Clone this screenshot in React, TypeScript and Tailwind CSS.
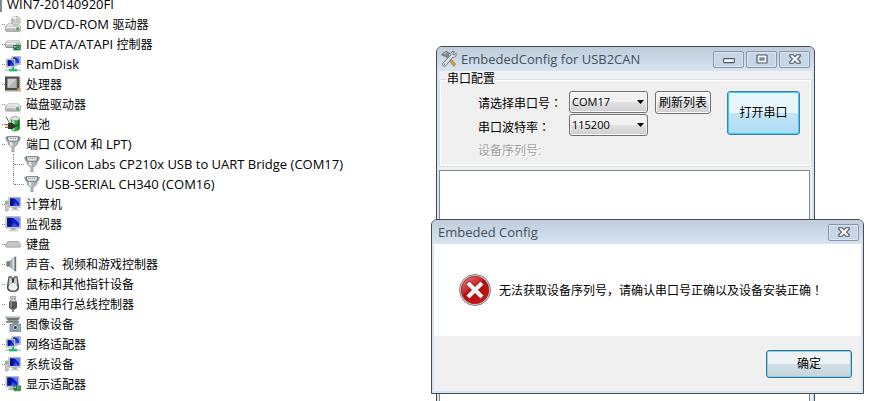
import React, { useState } from "react";

const UI_FONT = "font-['Open_Sans','Noto_Sans_CJK_SC',sans-serif]";
const DIALOG_FONT = "font-['Liberation_Sans','Noto_Sans_CJK_SC',sans-serif]";
const CENTERED_MARK = "font-['Noto_Sans_CJK_JP',sans-serif]";

function Svg({ children }: { children: React.ReactNode }) {
  return (
    <svg viewBox="0 0 16 16" className="size-4 shrink-0" aria-hidden="true">
      {children}
    </svg>
  );
}

function DriveBody({ y }: { y: number }) {
  return (
    <g transform={`translate(0 ${y})`}>
      <path d="M3 .4h10.5L15.7 3.2v4.4l-1.2.9H1.5L.3 7.6V3.2z" fill="#8d8d8d" />
      <path d="M3.2 .7h10L15.2 3.2H.8z" fill="#e4e4e4" />
      <path d="M1 3.2h14.2V7l-.8.6H1.8L1 7z" fill="#c9c9c9" />
      <path d="M1.4 3.6h13.4v1.1H1.4z" fill="#f4f4f4" />
      <path d="M1.6 5.6h8.6v1.2H1.6z" fill="#b2b2b2" />
      <path d="M11.5 4h2.2v3h-2.2z" fill="#1d9b2a" />
      <path d="M12 4.4h1v1h-1z" fill="#7cf081" />
    </g>
  );
}

function Card({ x, y }: { x: number; y: number }) {
  return (
    <g transform={`translate(${x} ${y})`}>
      <path d="M0 0h7.4v5.2H0z" fill="#1d7a48" />
      <path d="M1 1h1.5v1.5H1zM3.5 1H6v2.6H3.5z" fill="#a5d8b4" />
      <path d="M4 1.6h1.5v1.4H4z" fill="#143d2a" />
      <path d="M1 5.2h1v1H1zM3 5.2h1v1H3zM5 5.2h1v1H5z" fill="#c29a3d" />
    </g>
  );
}

function Screen({ x, y, w, h }: { x: number; y: number; w: number; h: number }) {
  return (
    <g>
      <rect x={x} y={y} width={w} height={h} rx=".5" fill="#d3d6da" stroke="#8f959c" strokeWidth=".6" />
      <rect x={x + 1.3} y={y + 1.2} width={w - 2.6} height={h - 2.6} fill="#0c1ec4" />
      <path d={`M${x + 1.3} ${y + 1.2}h${w * 0.3}v${h - 2.6}h${-w * 0.3}z`} fill="#0a1180" />
      <path d={`M${x + w * 0.5} ${y + 1.2}h${w * 0.5 - 1.3}v${h * 0.5}z`} fill="#5c83ff" />
      <path d={`M${x + w * 0.35} ${y + h - 1.4}l${w * 0.2} ${-h * 0.35}l${w * 0.3} ${h * 0.35}z`} fill="#3450ee" />
    </g>
  );
}

const DvdIcon = () => (
  <Svg>
    <DriveBody y={7.2} />
    <circle cx="10.8" cy="4.8" r="4.5" fill="#d4d4d8" stroke="#969696" strokeWidth=".7" />
    <path d="M10.8 4.8 8 1.4A4.3 4.3 0 0 1 11 .5z" fill="#fff" />
    <path d="M10.8 4.8 13.8 8a4.3 4.3 0 0 0 1.2-2.5z" fill="#a9dca9" />
    <path d="M10.8 4.8 6.6 6.2 6.5 4z" fill="#b5b5c9" />
    <circle cx="10.8" cy="4.8" r="1.4" fill="#fff" stroke="#888" strokeWidth=".6" />
  </Svg>
);
const IdeIcon = () => (
  <Svg>
    <DriveBody y={3.5} />
    <Card x={8.3} y={9} />
  </Svg>
);
const DiskIcon = () => (
  <Svg>
    <DriveBody y={7} />
  </Svg>
);
const NetworkIcon = () => (
  <Svg>
    <Screen x={6.8} y={0.4} w={8.8} h={8.2} />
    <Screen x={1.4} y={3} w={8.8} h={8.2} />
    <path d="M11 8.6h2v1.2h-2z" fill="#aaa" />
    <path d="M7 11.4h2v2H7z" fill="#13a262" />
    <path d="M0 13.4h16v1.6H0z" fill="#c2c8c4" />
    <path d="M4 13h8v2.4H4z" fill="#1cc079" />
  </Svg>
);
const CpuIcon = () => (
  <Svg>
    <path d="M.5 15.4h15M15.3 2v13" stroke="#c7a254" strokeWidth="1.2" strokeDasharray="1 1" />
    <path d="M0 .5h14.5v14H0z" fill="#4c4c4c" />
    <path d="M2.6 2.8h9.2v9.2H2.6z" fill="#b4b4b4" />
    <path d="M2.6 2.8h9.2l-9.2 9.2z" fill="#d0d0d0" />
    <path d="M12 12h2v2h-2z" fill="#c58b22" />
  </Svg>
);
const BatteryIcon = () => (
  <Svg>
    <path d="M5.6 2.8h9v9.8q-.6 2.6-4.5 2.8t-4.5-2.8z" fill="#2aa83a" />
    <path d="M7 3.6h2.4v11H7.8L7 13.6z" fill="#a8f0a8" />
    <path d="M12.8 3.6h1.8v9.2l-1.8 1.6z" fill="#12702a" />
    <ellipse cx="10.1" cy="2.6" rx="4.5" ry="2" fill="#e4e8e4" stroke="#777" strokeWidth=".6" />
    <path d="M1 .8 3.4 5q.6 2 2 2.4" stroke="#5b5b5b" fill="none" />
    <path d="M3 7h4.4l3.2 2.2v1.6L7.4 13H3z" fill="#33322f" />
    <path d="M10 10q2.4.2 3-2.2" stroke="#2e3a2e" strokeWidth="1.2" fill="none" />
    <path d="M0 8.6h3.4M0 11.4h3.4" stroke="#8e7440" strokeWidth="1.3" />
  </Svg>
);
const PortIcon = () => (
  <Svg>
    <path d="M.5 1.2h2.3v3.4H1.5zM13.2 1.2h2.3l-1 3.4h-1.3z" fill="#a4a9ac" stroke="#6f7477" strokeWidth=".5" />
    <path d="M2.3 .7h11.4l-1 4.6H3.3z" fill="#eceeef" stroke="#5f6467" strokeWidth=".9" />
    <path d="M4.6 2.6h6.8" stroke="#85898c" strokeWidth="1" strokeDasharray="1 .8" />
    <path d="M2.6 5.4h10.8l-1 3-2.4 2.4H6L3.6 8.4z" fill="#aeb3b6" stroke="#7b8184" strokeWidth=".6" />
    <path d="M5 6h2l.6 4.2H6.4L5 8.6z" fill="#e6e9ea" />
    <path d="M6.6 10.8h2.8V16H6.6z" fill="#c4c8ca" />
    <path d="M6.4 12h3.2M6.4 13.8h3.2M6.4 15.6h3.2" stroke="#84898c" strokeWidth=".7" />
  </Svg>
);
const ComputerIcon = () => (
  <Svg>
    <path d="M.4 5h2.8v9.8H.4z" fill="#d1d1cb" stroke="#858585" strokeWidth=".6" />
    <path d="M1 6h1.4v1.8H1z" fill="#3abf46" />
    <Screen x={3.8} y={1.2} w={12} h={10} />
    <path d="M8 11.3h4v2H8z" fill="#a5a5a0" />
    <path d="M6 13.2h8v1.2H6z" fill="#c3c3bf" />
  </Svg>
);
const MonitorIcon = () => (
  <Svg>
    <Screen x={0.8} y={0.6} w={14.8} h={11.6} />
    <path d="M6 12.2h4.5v2H6z" fill="#aaa9a2" />
    <path d="M3.5 13.8h9.5v1.6H3.5z" fill="#c9c9c4" />
  </Svg>
);
const KeyboardIcon = () => (
  <Svg>
    <path d="M3 5h10.2l2.5 3.8v1.8l-1.2 1h-13l-1.2-1V8.8z" fill="#8d8d8d" />
    <path d="M3.4 5.6h9.4l2.2 3.4H1.2z" fill="#dedede" />
    <path d="M3.4 6.6h9.6M2.4 8.2h11.6" stroke="#8b8b8b" strokeWidth=".9" strokeDasharray="1 1" />
    <path d="M1 9.4h14v1H1z" fill="#f4f4f4" />
  </Svg>
);
const SpeakerIcon = () => (
  <Svg>
    <path d="M1.5 5.2h3.2v5.4H1.5z" fill="#6f7478" />
    <path d="M4.7 5.2 10 .8v14.4l-5.3-4.6z" fill="#a8adb0" stroke="#777" strokeWidth=".5" />
    <path d="M7.5 3.5 9 2v12l-1.5-1.5z" fill="#dfe3e5" />
    <path d="M10 .8h1.2v14.4H10z" fill="#6c7174" />
  </Svg>
);
const MouseIcon = () => (
  <Svg>
    <path d="M3.6.3h3L8 2.2 9.4.3h3L13.6 7l.6 4.4Q13.6 16 8 16t-6.2-4.6L2.4 7z" fill="#4c5056" />
    <path d="M4.4 1.4h1.8L7.2 5v2L3.6 9zM11.6 1.4H9.8L8.8 5v2l3.6 2z" fill="#c9ccd0" />
    <path d="M8 6.8q3.6.4 4.6 4.6-.6 3-4.6 3.2-4-.2-4.6-3.2Q4.400 7.200 8 6.800z" fill="#f1f1f1" />
    <path d="M8 3.200v3" stroke="#2c2f33" strokeWidth="1.400" />
  </Svg>
);
const UsbIcon = () => (
  <Svg>
    <path d="M5.3.5h5.4V6H5.3z" fill="#d5d5d5" stroke="#8a8a8a" strokeWidth=".7" />
    <path d="M6.5 2h1v1.500h-1zM8.800 2h1v1.500h-1z" fill="#777" />
    <path d="M4 5.500h8v5.700l-2 2.300H6l-2-2.300z" fill="#565656" />
    <path d="M5 6h2v5.500H5z" fill="#878787" />
    <path d="M7.200 13.500h1.600V16H7.200z" fill="#666" />
  </Svg>
);
const CameraIcon = () => (
  <Svg>
    <path d="M0 .8h15.500l-2.500 4H3z" fill="#6d7778" />
    <path d="M.5 .8h14.500v1.200H.5z" fill="#b0b9b9" />
    <path d="M1 5.200h13v1.400H1z" fill="#566061" />
    <path d="M5 8.300h2.500l1-1.300h4l1 1.300H16v7H5z" fill="#a2b3ba" stroke="#4d5c62" strokeWidth=".7" />
    <circle cx="10.400" cy="11.600" r="2.900" fill="#e9f1f4" stroke="#3f4e55" strokeWidth=".7" />
    <circle cx="10.400" cy="11.600" r="1.600" fill="#26435a" />
  </Svg>
);
const DisplayIcon = () => (
  <Svg>
    <Screen x={1} y={0.4} w={13} h={10.600} />
    <path d="M5 11h3.500v1.600H5zM3 12.600h5.500v1.300H3z" fill="#b2b2ad" />
    <Card x={8.500} y={9.600} />
  </Svg>
);

const Dots = ({ wide = false }: { wide?: boolean }) => (
  <span className={`${wide ? "w-2.5" : "w-[3px]"} shrink-0 border-t border-dotted border-[#8a8a8a]`} />
);

/* Latin runs are set one step larger than the Chinese ones, as the system font does. */
function Label({ text }: { text: string }) {
  return (
    <span className="ml-[5px] whitespace-pre">
      {text.split(/([\u3001\u4e00-\u9fff]+)/).map((run, i) => (
        <span key={i} className={i % 2 === 1 ? "text-[12px]" : "text-[13px]"}>
          {run}
        </span>
      ))}
    </span>
  );
}

type Device = { name: string; Icon: () => React.ReactElement; children?: string[] };

const devices: Device[] = [
  { name: "DVD/CD-ROM 驱动器", Icon: DvdIcon },
  { name: "IDE ATA/ATAPI 控制器", Icon: IdeIcon },
  { name: "RamDisk", Icon: NetworkIcon },
  { name: "处理器", Icon: CpuIcon },
  { name: "磁盘驱动器", Icon: DiskIcon },
  { name: "电池", Icon: BatteryIcon },
  {
    name: "端口 (COM 和 LPT)",
    Icon: PortIcon,
    children: ["Silicon Labs CP210x USB to UART Bridge (COM17)", "USB-SERIAL CH340 (COM16)"],
  },
  { name: "计算机", Icon: ComputerIcon },
  { name: "监视器", Icon: MonitorIcon },
  { name: "键盘", Icon: KeyboardIcon },
  { name: "声音、视频和游戏控制器", Icon: SpeakerIcon },
  { name: "鼠标和其他指针设备", Icon: MouseIcon },
  { name: "通用串行总线控制器", Icon: UsbIcon },
  { name: "图像设备", Icon: CameraIcon },
  { name: "网络适配器", Icon: NetworkIcon },
  { name: "系统设备", Icon: ComputerIcon },
  { name: "显示适配器", Icon: DisplayIcon },
];

function DeviceTree() {
  return (
    <div className={`-mt-1.5 text-[12px] leading-5 whitespace-nowrap text-black ${UI_FONT}`}>
      <div className="flex h-5 items-center">
        <span className="h-4 w-0.5 bg-[#7d8b93]" />
        <Label text="WIN7-20140920FI" />
      </div>
      <ul>
        {devices.map(({ name, Icon, children }) => (
          <li key={name}>
            <div className="flex h-5 items-center pl-0.5">
              <Dots />
              <Icon />
              <Label text={name} />
            </div>
            {children && (
              <ul className="ml-[13px]">
                {children.map((child, i) => (
                  <li key={child} className="flex h-5">
                    <span
                      className={`${i === children.length - 1 ? "h-2.5" : "h-5"} border-l border-dotted border-[#8a8a8a]`}
                    />
                    <span className="flex items-center">
                      <Dots wide />
                      <PortIcon />
                      <Label text={child} />
                    </span>
                  </li>
                ))}
              </ul>
            )}
          </li>
        ))}
      </ul>
    </div>
  );
}

function ToolsIcon() {
  return (
    <Svg>
      <path d="M.6 4 2.600 1.400 6 .6l2.600 1.800-1 1.200L8 5 6 7 4.400 5.200 2.600 5z" fill="#7f8a94" stroke="#4d5760" strokeWidth=".6" />
      <path d="M2.800 2.600 5.600 1.600" stroke="#d5dce2" strokeWidth=".9" />
      <path d="m5.600 6.200 1.600-1.400 7.600 8.400-2 2.200z" fill="#e09a3e" stroke="#8a5c22" strokeWidth=".5" />
      <path d="M15.200 2.200 13 4.200 11.600 3l1.800-2.400Q10.500-.2 9.600 2.500l.3 1.700L2.500 11.600q-2 1.500-.6 3.200t3.200-.4L11.500 6.400q4.200.4 3.700-4.200z" fill="#dde5ec" stroke="#566676" strokeWidth=".8" />
      <path d="M3 13.200h1" stroke="#465967" />
    </Svg>
  );
}

const CloseGlyph = () => (
  <svg viewBox="0 0 12 10" className="h-2.5 w-3" aria-hidden="true">
    <path
      d="M.8 .7h3.400L6 2.600 7.800 .7h3.400v1.500L8.600 5l2.600 2.800v1.500H7.800L6 7.400 4.200 9.300H.8V7.800L3.400 5 .8 2.200z"
      fill="#f8f9fa"
      stroke="#505666"
      strokeWidth="1.100"
    />
  </svg>
);
const MinGlyph = () => (
  <svg viewBox="0 0 12 10" className="h-2.5 w-3" aria-hidden="true">
    <rect x=".6" y="4.600" width="10.800" height="4" rx=".6" fill="#f8f9fa" stroke="#505666" strokeWidth="1.100" />
  </svg>
);
const MaxGlyph = () => (
  <svg viewBox="0 0 12 10" className="h-2.5 w-3" aria-hidden="true">
    <rect x="1" y="1" width="10" height="8" rx=".6" fill="#f8f9fa" stroke="#505666" strokeWidth="1.200" />
    <rect x="4" y="4" width="4" height="2" fill="#d5dfea" stroke="#505666" />
  </svg>
);

function CaptionButton({ label, children, onClick }: { label: string; children: React.ReactNode; onClick?: () => void }) {
  return (
    <button
      type="button"
      aria-label={label}
      onClick={onClick}
      className="flex h-[17px] w-[31px] items-center justify-center rounded-[2px] border border-[#8795b0] bg-[#c8d5e4] shadow-[inset_0_0_0_1px_#dbe5f0]"
    >
      {children}
    </button>
  );
}

function PortSelect({ id, options }: { id: string; options: string[] }) {
  const [value, setValue] = useState(options[0]);
  return (
    <span className="relative flex">
      <select
        id={id}
        value={value}
        onChange={(e) => setValue(e.target.value)}
        className="h-[22px] w-[79px] appearance-none rounded-[3px] border border-[#707070] bg-linear-to-b from-[#f2f2f2] from-50% via-[#e2e2e2] via-50% to-[#cfcfcf] pl-0.5 font-['Open_Sans',sans-serif] text-[11px] text-black shadow-[inset_0_0_0_1px_#fafafa]"
      >
        {options.map((o) => (
          <option key={o}>{o}</option>
        ))}
      </select>
      <svg viewBox="0 0 7 4" className="pointer-events-none absolute top-[9px] right-1 h-1 w-[7px]" aria-hidden="true">
        <path d="M0 0h7L3.500 4z" fill="#000" />
      </svg>
    </span>
  );
}

function ConfigWindow() {
  return (
    <section
      aria-label="EmbededConfig for USB2CAN"
      className="absolute top-[46px] -bottom-2 left-[436px] flex w-[379px] flex-col rounded-t-md border border-[#454b52] bg-[#d7e4f1] px-0.5"
    >
      <header className="-mx-0.5 flex h-6 shrink-0 items-center rounded-t-[5px] bg-linear-to-b from-[#bfcddb] to-[#d7e4f1] pr-1 pl-1">
        <ToolsIcon />
        <h1 className={`ml-1 flex-1 text-[13px] leading-5 whitespace-nowrap text-[#46505c] ${UI_FONT}`}>
          EmbededConfig for USB2CAN
        </h1>
        <div className="flex gap-0.5">
          <CaptionButton label="最小化"><MinGlyph /></CaptionButton>
          <CaptionButton label="最大化"><MaxGlyph /></CaptionButton>
          <CaptionButton label="关闭"><CloseGlyph /></CaptionButton>
        </div>
      </header>
      <div className={`flex flex-1 flex-col bg-[#f0f0f0] text-[12px] leading-4 text-black ${DIALOG_FONT}`}>
        <fieldset className="h-24 shrink-0 rounded-[2px] border border-[#d5dfe5] shadow-[inset_0_0_0_1px_#fff]">
          <legend className="ml-1.5 px-px">串口配置</legend>
          <div className="flex items-start pt-1 pl-[38px]">
            <div className="grid w-[91px] auto-rows-[24px] items-center whitespace-nowrap">
              <label htmlFor="port">请选择串口号<span className={CENTERED_MARK}>：</span></label>
              <label htmlFor="baud">串口波特率<span className={CENTERED_MARK}>：</span></label>
              <span className="text-[#a0a0a0] [text-shadow:1px_1px_0_#fff]">设备序列号:</span>
            </div>
            <div className="grid gap-px">
              <PortSelect id="port" options={["COM17", "COM16"]} />
              <PortSelect id="baud" options={["115200", "9600"]} />
            </div>
            <button
              type="button"
              className="ml-[7px] h-[23px] w-14 rounded-[3px] border border-[#707070] bg-linear-to-b from-[#f2f2f2] from-50% via-[#e2e2e2] via-50% to-[#cfcfcf] text-center whitespace-nowrap shadow-[inset_0_0_0_1px_#fafafa]"
            >
              刷新列表
            </button>
            <button
              type="button"
              className="ml-4 h-11 w-[73px] rounded-[3px] border border-[#3c7fb1] bg-linear-to-b from-[#e8f6fd] from-50% via-[#c4e5f6] via-50% to-[#aedcf5] whitespace-nowrap shadow-[inset_0_0_0_1px_#35cdf6]"
            >
              打开串口
            </button>
          </div>
        </fieldset>
        <textarea
          aria-label="日志"
          readOnly
          className="mt-[3px] mr-0.5 flex-1 resize-none border border-[#828790] bg-white outline-none"
        />
      </div>
    </section>
  );
}

function ErrorIcon() {
  return (
    <svg viewBox="0 0 32 32" className="size-8 shrink-0" aria-hidden="true">
      <defs>
        <linearGradient id="errorRed" x1="0" y1="0" x2=".7" y2="1">
          <stop offset="0" stopColor="#e88b86" />
          <stop offset=".45" stopColor="#c8262a" />
          <stop offset=".5" stopColor="#b00c10" />
          <stop offset="1" stopColor="#cf1412" />
        </linearGradient>
      </defs>
      <circle cx="16" cy="16" r="15.500" fill="#e2e2e2" stroke="#7c7c7c" />
      <circle cx="16" cy="16" r="13.800" fill="url(#errorRed)" stroke="#8c1a1a" strokeWidth=".8" />
      <path d="m10.500 10.500 11 11m0-11-11 11" stroke="#7c0b0d" strokeWidth="5.400" strokeLinecap="square" />
      <path d="m10.500 10.500 11 11m0-11-11 11" stroke="#f0f0f0" strokeWidth="4.400" strokeLinecap="square" />
    </svg>
  );
}

function ErrorDialog() {
  return (
    <section
      role="alertdialog"
      aria-labelledby="error-title"
      aria-describedby="error-text"
      className={`absolute top-[219px] left-[431px] flex w-[433px] flex-col rounded-t-md border border-[#454b52] bg-[#d7e4f1] px-0.5 pb-0.5 ${UI_FONT}`}
    >
      <header className="-mx-0.5 flex h-6 items-center rounded-t-[5px] bg-linear-to-b from-[#bfcddb] to-[#d7e4f1] pr-1 pl-1.5">
        <h2 id="error-title" className="flex-1 text-[13px] leading-5 text-[#46505c]">Embeded Config</h2>
        <CaptionButton label="关闭"><CloseGlyph /></CaptionButton>
      </header>
      <div className="flex h-[92px] items-center gap-2 bg-white pl-[25px] text-black">
        <ErrorIcon />
        <p id="error-text" className="text-[12px] leading-4 whitespace-nowrap">
          无法获取设备序列号，请确认串口号正确以及设备安装正确<span className={CENTERED_MARK}>！</span>
        </p>
      </div>
      <footer className="flex h-[55px] items-center justify-end bg-[#f0f0f0] pr-[9px]">
        <button
          type="button"
          className="h-7 w-[86px] rounded-[3px] border border-[#3f6f8f] bg-linear-to-b from-[#edf2f5] from-50% via-[#d3dfe5] via-50% to-[#c5d5dd] text-[12px] leading-4 text-black shadow-[inset_0_0_0_1px_#77dcf3]"
        >
          确定
        </button>
      </footer>
    </section>
  );
}

export default function App() {
  return (
    <main className="relative h-screen overflow-hidden bg-white">
      <DeviceTree />
      <ConfigWindow />
      <ErrorDialog />
    </main>
  );
}
